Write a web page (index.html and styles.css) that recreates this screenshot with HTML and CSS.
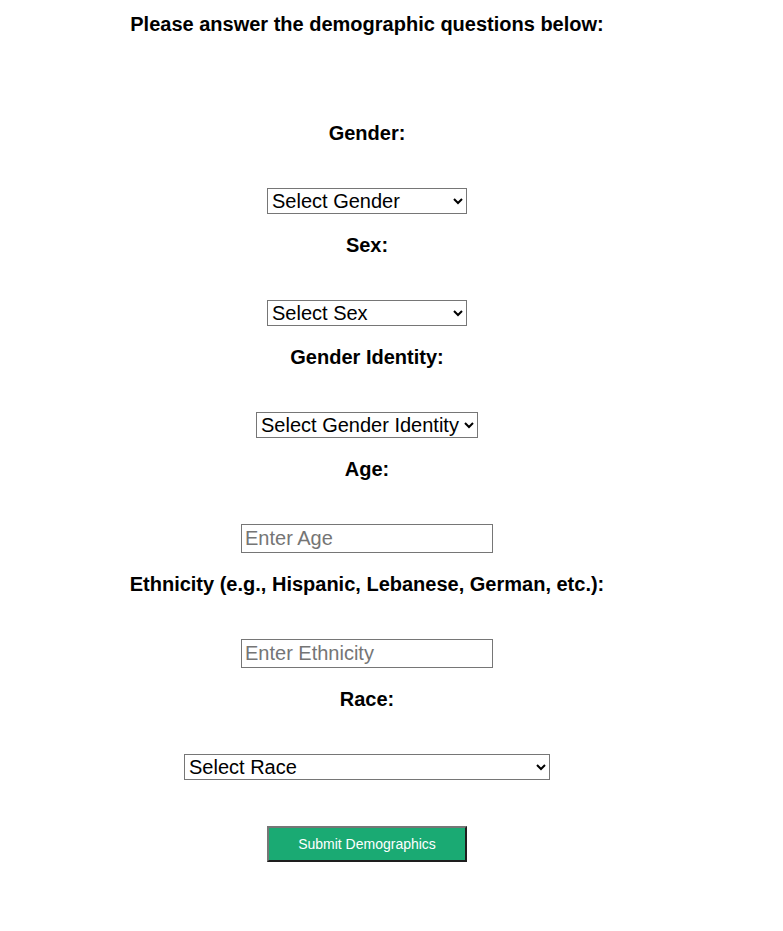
FILE: index.html
```
<!DOCTYPE html>
<html lang="en">
<head>
<meta charset="utf-8">
<title>Demographics</title>
<link rel="stylesheet" href="styles.css">
</head>
<body>
<form class="page">
  <h3 class="title">Please answer the demographic questions below:</h3>
  <div class="field first">
    <label class="label" for="gender">Gender:</label>
    <select id="gender" class="control w200">
      <option>Select Gender</option>
    </select>
  </div>
  <div class="field">
    <label class="label" for="sex">Sex:</label>
    <select id="sex" class="control w200">
      <option>Select Sex</option>
    </select>
  </div>
  <div class="field">
    <label class="label" for="gi">Gender Identity:</label>
    <select id="gi" class="control w222">
      <option>Select Gender Identity</option>
    </select>
  </div>
  <div class="field">
    <label class="label" for="age">Age:</label>
    <input id="age" class="text" type="text" placeholder="Enter Age">
  </div>
  <div class="field">
    <label class="label" for="eth">Ethnicity (e.g., Hispanic, Lebanese, German, etc.):</label>
    <input id="eth" class="text" type="text" placeholder="Enter Ethnicity">
  </div>
  <div class="field">
    <label class="label" for="race">Race:</label>
    <select id="race" class="control w366">
      <option>Select Race</option>
    </select>
  </div>
  <button type="button" class="submit">Submit Demographics</button>
</form>
</body>
</html>
```
FILE: styles.css
```
html, body {
  margin: 0;
  padding: 0;
  background: #ffffff;
}
body {
  font-family: "Liberation Sans", Arial, sans-serif;
  color: #000;
}
.page {
  width: 718px;
  margin-left: 8px;
  padding-top: 13px;
  display: flex;
  flex-direction: column;
  align-items: center;
}
.title {
  margin: 0;
  font-size: 20px;
  line-height: 23px;
  font-weight: bold;
}
.field {
  display: flex;
  flex-direction: column;
  align-items: center;
  margin-top: 20px;
}
.field.first {
  margin-top: 86px;
}
.label {
  font-size: 20px;
  line-height: 23px;
  font-weight: bold;
  margin-bottom: 43px;
}
.control {
  font-family: "Liberation Sans", Arial, sans-serif;
  font-size: 20px;
  height: 26px;
  border: 1px solid #767676;
  border-radius: 0;
  background: #fff;
  color: #000;
  padding: 0;
}
.w200 { width: 200px; }
.w222 { width: 222px; }
.w366 { width: 366px; }
.text {
  font-family: "Liberation Sans", Arial, sans-serif;
  font-size: 20px;
  box-sizing: border-box;
  width: 252px;
  height: 29px;
  border: 1px solid #767676;
  border-radius: 0;
  padding: 1px 3px;
  color: #000;
}
.text::placeholder {
  color: #757575;
}
.submit {
  margin-top: 46px;
  width: 200px;
  height: 36px;
  box-sizing: border-box;
  background: #1aaa73;
  color: #fff;
  font-family: "Liberation Sans", Arial, sans-serif;
  font-size: 14px;
  border-style: solid;
  border-width: 2px;
  border-color: #767676 #1e1e1e #1e1e1e #767676;
  cursor: pointer;
}
```
